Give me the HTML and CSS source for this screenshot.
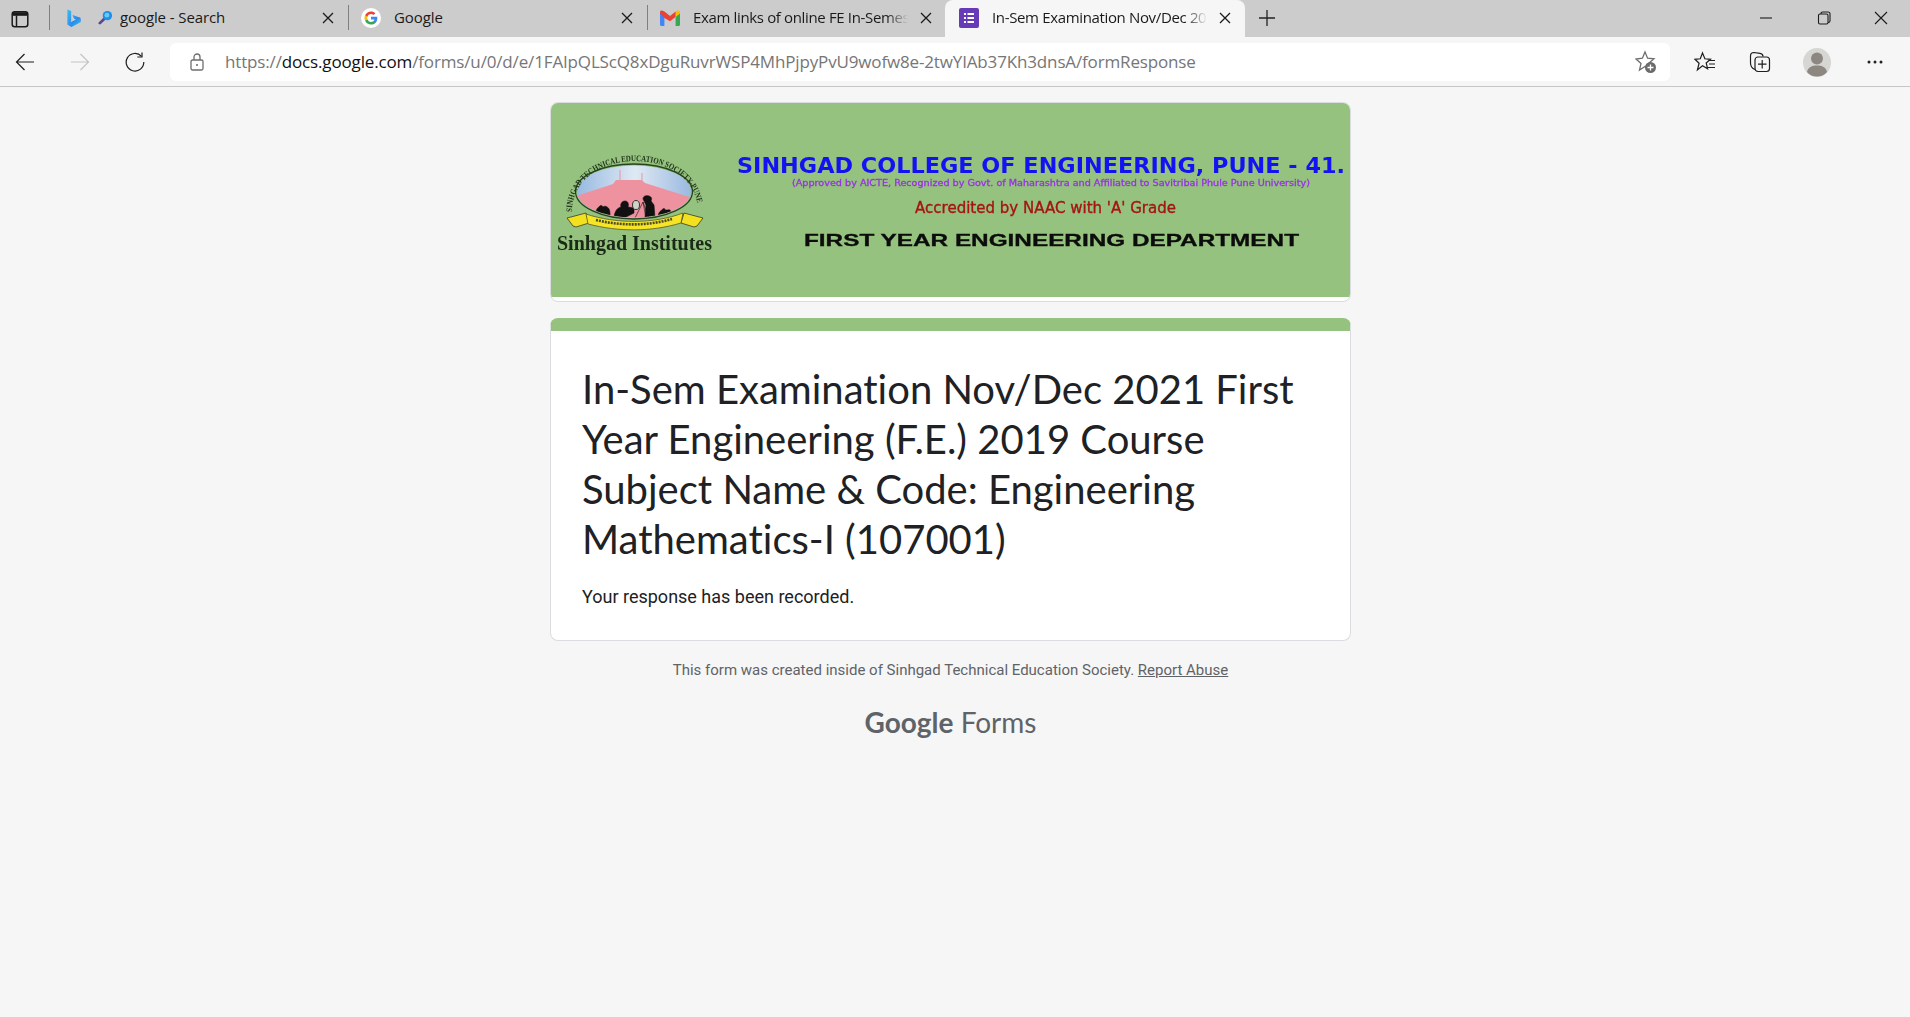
FILE: index.html
```html
<!DOCTYPE html>
<html lang="en">
<head>
<meta charset="utf-8">
<title>In-Sem Examination</title>
<link rel="stylesheet" href="styles.css">
</head>
<body>
<header class="tabstrip">
  <div class="tab-toggle">
    <svg class="ic20" viewBox="0 0 20 20"><rect x="2.2" y="2.8" width="15.6" height="15" rx="2.5" fill="none" stroke="#1a1a1a" stroke-width="1.5"/><path d="M3 3.2h14v3.6H3z" fill="#1a1a1a"/><path d="M6.5 6.5v11" stroke="#1a1a1a" stroke-width="1.5"/></svg>
  </div>
  <div class="sep"></div>
  <div class="tab tab-first">
    <svg class="bing" viewBox="0 0 16 20"><defs><linearGradient id="bg1" x1="0" y1="0" x2="1" y2="1"><stop offset="0" stop-color="#37bdf2"/><stop offset="1" stop-color="#2a6ce8"/></linearGradient><linearGradient id="bg2" x1="0" y1="0" x2="1" y2="1"><stop offset="0" stop-color="#1f6fe8"/><stop offset="1" stop-color="#35c8ef"/></linearGradient></defs><path d="M1.5 1l4 1.4v12.2l5.4-3.1-2.4-1.1-1.5-3.6 8.5 3v4.2L5.6 19.500 1.500 17z" fill="url(#bg1)"/><path d="M5.500 14.600l5.400-3.100-2.400-1.100 6.900 0.600v3.500L5.600 19.500z" fill="url(#bg2)"/></svg>
    <svg class="glass" viewBox="0 0 16 16"><path d="M6.500 9.500L2 14" stroke="#5b4a8f" stroke-width="3" stroke-linecap="round"/><circle cx="10" cy="6" r="5" fill="#1d8fe6"/><circle cx="9.500" cy="5.500" r="2.600" fill="#6cc7f7"/></svg>
    <span class="tab-title">google - Search</span>
    <svg class="close" viewBox="0 0 12 12"><path d="M1 1l10 10M11 1L1 11"/></svg>
  </div>
  <div class="sep"></div>
  <div class="tab">
    <svg class="ic20 fav" viewBox="0 0 20 20"><circle cx="10" cy="10" r="10" fill="#fff"/><path d="M16.300 10.200c0-.5 0-1-.1-1.400H10v2.700h3.500c-.2.800-.6 1.500-1.300 2v1.600h2.100c1.300-1.100 2-2.900 2-4.900z" fill="#4285f4"/><path d="M10 16.500c1.800 0 3.200-.6 4.300-1.600l-2.100-1.600c-.6.400-1.300.6-2.200.6-1.700 0-3.100-1.100-3.600-2.700H4.200v1.700c1.100 2.100 3.300 3.600 5.800 3.600z" fill="#34a853"/><path d="M6.400 11.200c-.3-.8-.3-1.600 0-2.400V7.100H4.200c-.9 1.800-.9 4 0 5.800z" fill="#fbbc05"/><path d="M10 6.100c.9 0 1.800.3 2.500 1l1.900-1.900C13.200 4.100 11.600 3.500 10 3.500c-2.500 0-4.700 1.500-5.800 3.600l2.200 1.700C6.900 7.200 8.300 6.100 10 6.100z" fill="#ea4335"/></svg>
    <span class="tab-title">Google</span>
    <svg class="close" viewBox="0 0 12 12"><path d="M1 1l10 10M11 1L1 11"/></svg>
  </div>
  <div class="sep"></div>
  <div class="tab">
    <svg class="ic20 fav" viewBox="0 0 20 16"><path d="M0 3v11.500c0 .8.600 1.500 1.400 1.500h3V8l-2-6z" fill="#4285f4"/><path d="M20 3v11.500c0 .8-.600 1.500-1.400 1.500h-3V8l2-6z" fill="#34a853"/><path d="M15.600 1.500L18 .6c1-.4 2 .4 2 1.400v1.500L15.600 7z" fill="#fbbc05"/><path d="M4.400 8L0 3.500V2C0 1 1 .2 2 .6l2.400.9L10 6l5.600-4.500V7L10 11.200z" fill="#ea4335"/></svg>
    <span class="tab-title faded">Exam links of online FE In-Semes</span>
    <svg class="close" viewBox="0 0 12 12"><path d="M1 1l10 10M11 1L1 11"/></svg>
  </div>
  <div class="tab tab-active">
    <svg class="ic20 fav" viewBox="0 0 20 20"><rect width="20" height="20" rx="2" fill="#673ab7"/><path d="M5 5h2v2H5zM8.500 5H15v2H8.500zM5 9h2v2H5zM8.500 9H15v2H8.500zM5 13h2v2H5zM8.500 13H15v2H8.500z" fill="#fff"/></svg>
    <span class="tab-title faded">In-Sem Examination Nov/Dec 20</span>
    <svg class="close" viewBox="0 0 12 12"><path d="M1 1l10 10M11 1L1 11"/></svg>
  </div>
  <svg class="newtab" viewBox="0 0 16 16"><path d="M8 0v16M0 8h16"/></svg>
  <div class="winctl">
    <svg class="wc" viewBox="0 0 14 14"><path d="M1 7h12"/></svg>
    <svg class="wc" viewBox="0 0 14 14"><rect x="1.500" y="3" width="9.500" height="10" rx="1.500"/><path d="M4 3V2.500C4 1.600 4.700 1 5.500 1H11c1.100 0 2 .9 2 2v7c0 .9-.7 1.500-2 1.500"/></svg>
    <svg class="wc" viewBox="0 0 14 14"><path d="M1 1l12 12M13 1L1 13"/></svg>
  </div>
</header>

<nav class="toolbar">
  <div class="navs">
    <svg class="tool" viewBox="0 0 20 20"><path d="M19 10H1.500M9.500 2l-8 8 8 8" class="ln"/></svg>
    <svg class="tool" viewBox="0 0 20 20"><path d="M1 10h17.500M10.500 2l8 8-8 8" class="ln dim"/></svg>
    <svg class="tool" viewBox="0 0 20 20"><path d="M16.500 4.300A8.800 8.800 0 1 0 18.800 10" class="ln"/><path d="M17 .5v4.500h-4.700" class="ln"/></svg>
  </div>
  <div class="address">
    <svg class="lock" viewBox="0 0 14 18"><rect x="1" y="7" width="12" height="10" rx="1.500" class="gln"/><path d="M4 7V4a3 3 0 0 1 6 0v3" class="gln"/><circle cx="7" cy="12" r="1" fill="#666"/></svg>
    <div class="url">https://<b>docs.google.com</b>/forms/u/0/d/e/1FAIpQLScQ8xDguRuvrWSP4MhPjpyPvU9wofw8e-2twYIAb37Kh3dnsA/formResponse</div>
    <svg class="staradd" viewBox="0 0 22 24"><path d="M10 2l2.600 6.200 6.400.6-4.900 4.300 1.500 6.300L10 16.500 4.500 20l1.500-6.500L1 9l6.400-.8z" class="gln"/><circle cx="15.500" cy="17.500" r="5.500" fill="#6b6b6b"/><path d="M15.500 14.500v6M12.500 17.500h6" stroke="#fff" stroke-width="1.300"/></svg>
  </div>
  <div class="tools">
    <svg class="tool22" viewBox="0 0 22 22"><path d="M8.500 2l2.400 5.800 5.600.5-4.300 3.700 1.400 5.800L8.500 14.800 3.400 19l1.700-6.800L1 8.300l5.300-.5z" class="ln"/><path d="M14.500 9.500H21M15 13h6M13.500 16.500H21" class="ln"/></svg>
    <svg class="tool22" viewBox="0 0 22 22"><path d="M6 18.500C3.500 17.500 1.500 15 1.500 12V5C1.500 3 3 1.500 5 1.500l6 .8c2 .3 3 1.500 3 3.200" class="ln"/><rect x="6" y="6" width="14.500" height="14.500" rx="3" class="ln"/><path d="M13.200 9v8.500M9 13.200h8.500" class="ln"/></svg>
    <svg class="avatar" viewBox="0 0 28 29"><ellipse cx="14" cy="14.500" rx="14" ry="14.500" fill="#d6d6d2"/><circle cx="14" cy="10.500" r="6" fill="#8d8781"/><path d="M4 24c1-5 5-6.500 10-6.500S23 19 24 24c-2.500 3.200-6 4.500-10 4.500s-7.500-1.300-10-4.500z" fill="#8d8781"/></svg>
    <svg class="tool22 more" viewBox="0 0 22 22"><circle cx="5" cy="11" r="1.500"/><circle cx="11" cy="11" r="1.500"/><circle cx="17" cy="11" r="1.500"/></svg>
  </div>
</nav>

<main class="page">
  <section class="banner">
    <svg class="banner-art" viewBox="1 1 799 194">
      <defs>
        <clipPath id="oval"><ellipse cx="84" cy="89.500" rx="57" ry="26"/></clipPath>
        <linearGradient id="sky" x1="0" y1="0" x2="1" y2="0"><stop offset="0" stop-color="#8fb4de"/><stop offset=".5" stop-color="#dfe9f4"/><stop offset="1" stop-color="#8fb2dc"/></linearGradient>
        <path id="arc" d="M22 110C22 42 148 42 148 110"/>
      </defs>
      <rect width="801" height="197" fill="#95c37f"/>
      <ellipse cx="84" cy="89.500" rx="58.500" ry="27.500" fill="#95c37f" stroke="#28451f" stroke-width="1.300"/>
      <g clip-path="url(#oval)">
        <rect x="20" y="60" width="130" height="60" fill="url(#sky)"/>
        <path d="M20 96l43-14 3-4h26l3 3 48 15v25H20z" fill="#ee92a0"/>
        <path d="M70 78V68M92 78V71" stroke="#e993a3" stroke-width="1"/>
        <path d="M46 112c0-4 1-6 3-7 1-2 3-2 4 0 1-1 3-1 4 0 2 1 3 3 3 8zM64 115c1-6 3-9 7-10-1-3 1-6 4-6s4 3 3 6l6 1v5l-8 4zM85 116l8-16M93 100l3 16M99 116l-6-16M93 97c0-3 3-4 6-3 3 1 3 3 2 5l3 4 1 13H95l1-13zM108 116c0-5 2-7 4-8 1-2 3-2 3 0l3 0c2-1 3 1 3 3v5z" fill="#111" stroke="#111" stroke-width=".6"/>
        <ellipse cx="86" cy="103" rx="3.500" ry="4.500" fill="#cfd3c8" stroke="#333" stroke-width="1"/>
      </g>
      <text class="arc-text"><textPath href="#arc" textLength="172" lengthAdjust="spacingAndGlyphs">SINHGAD TECHNICAL EDUCATION SOCIETY-PUNE</textPath></text>
      <path d="M17 116l19-5 3 10-13 4-3-1zM153 116l-19-5-3 10 13 4 3-1z" fill="#f3e11f" stroke="#3b3a25" stroke-width=".8"/>
      <path d="M36 112c30 10 68 10 97-1l-2 10c-30 9-62 9-93 1z" fill="#f5e526" stroke="#5a5723" stroke-width=".8"/>
      <path d="M46 118c25 6 52 6 76-1" fill="none" stroke="#4d4a20" stroke-width="2.600" stroke-dasharray="2 1"/>
      <text class="inst" x="7" y="148" textLength="155" lengthAdjust="spacingAndGlyphs">Sinhgad Institutes</text>
      <text class="college" x="187" y="71" textLength="608" lengthAdjust="spacingAndGlyphs">SINHGAD COLLEGE OF ENGINEERING, PUNE - 41.</text>
      <text class="approved" x="242" y="84" textLength="518" lengthAdjust="spacingAndGlyphs">(Approved by AICTE, Recognized by Govt. of Maharashtra and Affiliated to Savitribai Phule Pune University)</text>
      <text class="naac" x="365" y="111" textLength="261" lengthAdjust="spacingAndGlyphs">Accredited by NAAC with 'A' Grade</text>
      <text class="dept" x="254" y="144" textLength="495" lengthAdjust="spacingAndGlyphs">FIRST YEAR ENGINEERING DEPARTMENT</text>
    </svg>
  </section>
  <section class="card">
    <h1 class="title">In-Sem Examination Nov/Dec 2021 First Year Engineering (F.E.) 2019 Course Subject Name &amp; Code: Engineering Mathematics-I (107001)</h1>
    <p class="recorded">Your response has been recorded.</p>
  </section>
  <p class="foot">This form was created inside of Sinhgad Technical Education Society. <a class="abuse" href="#">Report Abuse</a></p>
  <div class="brand"><span class="brand-g">Google</span> <span class="brand-f">Forms</span></div>
</main>
</body>
</html>
```
FILE: styles.css
```css
* { box-sizing: border-box; }
html, body { margin: 0; height: 100%; }
body { background: #f6f6f6; font-family: "Open Sans", "Noto Sans", sans-serif; overflow: hidden; }

.tabstrip { height: 37px; background: #cccccc; display: flex; align-items: center; color: #1a1a1a; }
.tab-toggle { width: 40px; padding-left: 10px; margin-right: 9px; display: flex; }
.ic20 { width: 20px; height: 20px; flex: none; }
.sep { width: 1px; height: 25px; background: #7f7f7f; flex: none; margin-bottom: 2px; }
.tab { width: 298px; height: 37px; display: flex; align-items: center; padding: 0 14px 2px 12px; flex: none; }
.tab .fav { margin-right: 13px; }
.tab-first { padding-left: 16px; }
.bing { width: 15px; height: 20px; margin-right: 17px; flex: none; }
.glass { width: 15px; height: 15px; margin-right: 7px; flex: none; }
.tab-title { font-size: 15px; line-height: 20px; padding-bottom: 1px; white-space: nowrap; overflow: hidden; flex: 1; color: #1a1a1a; font-family: "Open Sans", sans-serif; letter-spacing: -.1px; }
.faded { letter-spacing: -.35px; -webkit-mask-image: linear-gradient(90deg, #000 90%, transparent 100%); mask-image: linear-gradient(90deg, #000 90%, transparent 100%); }
.close { width: 12px; height: 12px; flex: none; margin-left: 12px; fill: none; stroke: #1a1a1a; stroke-width: 1.3; }
.tab-active { width: 300px; margin-left: -1px; padding-left: 14px; background: #f6f6f6; border-radius: 8px 8px 0 0; margin-right: 14px; }
.newtab { width: 16px; height: 16px; fill: none; stroke: #222; stroke-width: 1.300; margin-bottom: 2px; flex: none; }
.winctl { margin-left: auto; display: flex; gap: 43.500px; padding-right: 22px; margin-bottom: 2px; }
.wc { width: 14px; height: 14px; fill: none; stroke: #1a1a1a; stroke-width: 1.100; }

.toolbar { height: 50px; background: #f6f6f6; border-bottom: 1px solid #c6c6c6; display: flex; align-items: center; padding-bottom: 2px; padding-top: 3px; }
.navs { display: flex; gap: 35px; padding-left: 15px; width: 170px; flex: none; }
.tool { width: 20px; height: 20px; flex: none; }
.ln { fill: none; stroke: #1e1e1e; stroke-width: 1.200; }
.dim { stroke: #c4c4c4; }
.gln { fill: none; stroke: #6e6e6e; stroke-width: 1.300; }
.address { width: 1500px; height: 38px; background: #fff; border-radius: 6px; display: flex; align-items: center; padding: 0 13px 0 20px; flex: none; }
.lock { width: 14px; height: 18px; flex: none; margin-right: 21px; }
.url { font-size: 17px; line-height: 24px; padding-bottom: 1px; font-family: "Open Sans", sans-serif; color: #767676; white-space: nowrap; letter-spacing: -.15px; flex: 1; }
.url b { font-weight: 400; color: #111; }
.staradd { width: 22px; height: 24px; flex: none; }
.tools { display: flex; align-items: center; gap: 33px; padding-left: 24px; flex: 1; }
.tool22 { width: 22px; height: 22px; flex: none; }
.avatar { width: 28px; height: 29px; flex: none; margin-left: -1px; }
.more { fill: #222; }

.page { padding: 15px 9px 0 0; display: flex; flex-direction: column; align-items: center; }
.banner { width: 801px; height: 200px; background: #fff; border: 1px solid #dadce0; border-radius: 8px; overflow: hidden; flex: none; }
.banner-art { display: block; width: 799px; height: 194px; filter: blur(.35px); }
.arc-text { font: 700 8.500px "Liberation Serif", serif; fill: #23351c; }
.inst { font: 700 20px "Liberation Serif", serif; fill: #1b2a17; }
.college { font: 700 22px "DejaVu Sans", sans-serif; fill: #1212f2; }
.approved { font: 400 8.500px "DejaVu Sans", sans-serif; fill: #9a30e8; stroke: #9a30e8; stroke-width: .3px; }
.naac { font: 400 15px "DejaVu Sans", sans-serif; fill: #a51414; stroke: #a51414; stroke-width: .35px; }
.dept { font: 700 16.500px "Liberation Sans", sans-serif; fill: #0c0c0c; stroke: #0c0c0c; stroke-width: .3px; }

.card { width: 801px; margin-top: 16px; background: #fff; border: 1px solid #dadce0; border-top: 13px solid #95c37f; border-radius: 8px; padding: 33px 31px 31px; }
.title { margin: 0; font: 400 40px/50px Lato, sans-serif; font-variant-ligatures: none; color: #202124; }
.recorded { margin: 21px 0 0; font: 400 18px/24px Roboto, sans-serif; color: #202124; }
.foot { margin: 19px 0 0; font: 400 15px/20px Roboto, sans-serif; color: #5f6368; }
.abuse { color: #5f6368; text-decoration: underline; }
.brand { margin-top: 24px; font: 400 28px/36px Lato, sans-serif; color: #5f6368; }
.brand-g { font-weight: 700; }
```
